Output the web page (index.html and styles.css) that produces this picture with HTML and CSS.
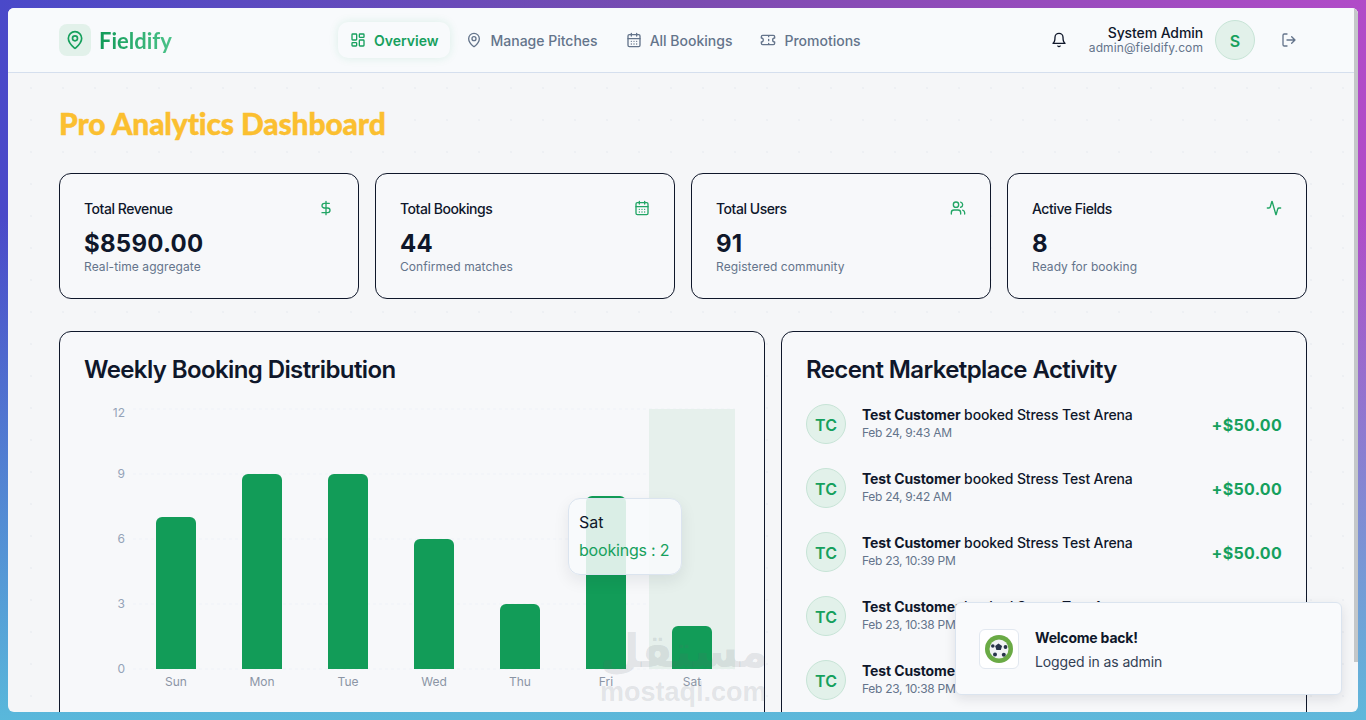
FILE: index.html
```html
<!DOCTYPE html>
<html lang="en">
<head>
<meta charset="utf-8">
<title>Fieldify</title>
<link rel="stylesheet" href="styles.css">
</head>
<body>
<div class="window">
  <header class="topbar">
    <a class="brand">
      <span class="brand-mark"><svg class="i20" viewBox="0 0 24 24"><path d="M20 10c0 5-5.500 10.200-7.400 11.800a1 1 0 0 1-1.200 0C9.500 20.200 4 15 4 10a8 8 0 0 1 16 0"/><circle cx="12" cy="10" r="3"/></svg></span>
      <span class="brand-name">Fieldify</span>
    </a>
    <nav class="nav">
      <a class="nav-item active"><svg class="i16" viewBox="0 0 24 24"><rect width="7" height="9" x="3" y="3" rx="1"/><rect width="7" height="5" x="14" y="3" rx="1"/><rect width="7" height="9" x="14" y="12" rx="1"/><rect width="7" height="5" x="3" y="16" rx="1"/></svg>Overview</a>
      <a class="nav-item"><svg class="i16" viewBox="0 0 24 24"><path d="M20 10c0 5-5.500 10.200-7.400 11.800a1 1 0 0 1-1.200 0C9.500 20.200 4 15 4 10a8 8 0 0 1 16 0"/><circle cx="12" cy="10" r="3"/></svg>Manage Pitches</a>
      <a class="nav-item"><svg class="i16" viewBox="0 0 24 24"><path d="M8 2v4M16 2v4"/><rect width="18" height="18" x="3" y="4" rx="2"/><path d="M3 10h18M8 14h.01M12 14h.01M16 14h.01M8 18h.01M12 18h.01M16 18h.01"/></svg>All Bookings</a>
      <a class="nav-item"><svg class="i16" viewBox="0 0 24 24"><path d="M2 9a3 3 0 0 1 0 6v2a2 2 0 0 0 2 2h16a2 2 0 0 0 2-2v-2a3 3 0 0 1 0-6V7a2 2 0 0 0-2-2H4a2 2 0 0 0-2 2ZM13 5v2M13 17v2M13 11v2"/></svg>Promotions</a>
    </nav>
    <div class="account">
      <svg class="i16 bell" viewBox="0 0 24 24"><path d="M10.300 21a1.940 1.940 0 0 0 3.400 0"/><path d="M6 8a6 6 0 0 1 12 0c0 7 3 9 3 9H3s3-2 3-9"/></svg>
      <div class="who"><div class="who-name">System Admin</div><div class="who-mail">admin@fieldify.com</div></div>
      <span class="avatar avatar-lg">S</span>
      <svg class="i16 logout" viewBox="0 0 24 24"><path d="M9 21H5a2 2 0 0 1-2-2V5a2 2 0 0 1 2-2h4M16 17l5-5-5-5M21 12H9"/></svg>
    </div>
  </header>

  <main class="content">
    <div class="inner">
      <h1 class="title">Pro Analytics Dashboard</h1>
      <section class="stats">
        <article class="stat">
          <div class="stat-head"><span>Total Revenue</span><svg class="i16 ok" viewBox="0 0 24 24"><path d="M12 2v20M17 5H9.500a3.500 3.500 0 0 0 0 7h5a3.500 3.500 0 0 1 0 7H6"/></svg></div>
          <div class="stat-value">$8590.00</div><div class="stat-note">Real-time aggregate</div>
        </article>
        <article class="stat">
          <div class="stat-head"><span>Total Bookings</span><svg class="i16 ok" viewBox="0 0 24 24"><path d="M8 2v4M16 2v4"/><rect width="18" height="18" x="3" y="4" rx="2"/><path d="M3 10h18M8 14h.01M12 14h.01M16 14h.01M8 18h.01M12 18h.01M16 18h.01"/></svg></div>
          <div class="stat-value">44</div><div class="stat-note">Confirmed matches</div>
        </article>
        <article class="stat">
          <div class="stat-head"><span>Total Users</span><svg class="i16 ok" viewBox="0 0 24 24"><path d="M16 21v-2a4 4 0 0 0-4-4H6a4 4 0 0 0-4 4v2"/><circle cx="9" cy="7" r="4"/><path d="M22 21v-2a4 4 0 0 0-3-3.870M16 3.130a4 4 0 0 1 0 7.750"/></svg></div>
          <div class="stat-value">91</div><div class="stat-note">Registered community</div>
        </article>
        <article class="stat">
          <div class="stat-head"><span>Active Fields</span><svg class="i16 ok" viewBox="0 0 24 24"><path d="M22 12h-2.480a2 2 0 0 0-1.930 1.460l-2.350 8.360a.25.25 0 0 1-.48 0L9.240 2.180a.25.25 0 0 0-.48 0l-2.350 8.360A2 2 0 0 1 4.490 12H2"/></svg></div>
          <div class="stat-value">8</div><div class="stat-note">Ready for booking</div>
        </article>
      </section>

      <section class="panels">
        <article class="panel">
          <h2 class="panel-title">Weekly Booking Distribution</h2>
          <div class="chart">
            <svg class="chart-svg" width="656" height="306" viewBox="0 -6 656 306">
              <g class="grid">
                <path d="M49 1H651M49 66H651M49 131H651M49 196H651M49 261H651"/>
              </g>
              <rect class="cursor" x="565" y="1" width="86" height="260"/>
              <g class="bars">
                <path d="M72 261V115a6 6 0 0 1 6-6h28a6 6 0 0 1 6 6V261Z"/>
                <path d="M158 261V72a6 6 0 0 1 6-6h28a6 6 0 0 1 6 6V261Z"/>
                <path d="M244 261V72a6 6 0 0 1 6-6h28a6 6 0 0 1 6 6V261Z"/>
                <path d="M330 261V137a6 6 0 0 1 6-6h28a6 6 0 0 1 6 6V261Z"/>
                <path d="M416 261V202a6 6 0 0 1 6-6h28a6 6 0 0 1 6 6V261Z"/>
                <path d="M502 261V94a6 6 0 0 1 6-6h28a6 6 0 0 1 6 6V261Z"/>
                <path d="M588 261V224a6 6 0 0 1 6-6h28a6 6 0 0 1 6 6V261Z"/>
              </g>
              <g class="y-axis">
                <text x="41" y="9">12</text><text x="41" y="70">9</text><text x="41" y="135">6</text><text x="41" y="200">3</text><text x="41" y="265">0</text>
              </g>
              <g class="x-axis">
                <text x="92" y="278">Sun</text><text x="178" y="278">Mon</text><text x="264" y="278">Tue</text><text x="350" y="278">Wed</text><text x="436" y="278">Thu</text><text x="522" y="278">Fri</text><text x="608" y="278">Sat</text>
              </g>
            </svg>
            <div class="tip"><div class="tip-label">Sat</div><div class="tip-value">bookings : 2</div></div>
          </div>
        </article>

        <article class="panel">
          <h2 class="panel-title">Recent Marketplace Activity</h2>
          <ul class="feed">
            <li class="row"><span class="avatar">TC</span><div class="row-body"><div class="row-text"><b>Test Customer</b> booked Stress Test Arena</div><div class="row-time">Feb 24, 9:43 AM</div></div><span class="row-amt">+$50.00</span></li>
            <li class="row"><span class="avatar">TC</span><div class="row-body"><div class="row-text"><b>Test Customer</b> booked Stress Test Arena</div><div class="row-time">Feb 24, 9:42 AM</div></div><span class="row-amt">+$50.00</span></li>
            <li class="row"><span class="avatar">TC</span><div class="row-body"><div class="row-text"><b>Test Customer</b> booked Stress Test Arena</div><div class="row-time">Feb 23, 10:39 PM</div></div><span class="row-amt">+$50.00</span></li>
            <li class="row"><span class="avatar">TC</span><div class="row-body"><div class="row-text"><b>Test Customer</b> booked Stress Test Arena</div><div class="row-time">Feb 23, 10:38 PM</div></div><span class="row-amt">+$50.00</span></li>
            <li class="row"><span class="avatar">TC</span><div class="row-body"><div class="row-text"><b>Test Customer</b> booked Stress Test Arena</div><div class="row-time">Feb 23, 10:38 PM</div></div><span class="row-amt">+$50.00</span></li>
          </ul>
        </article>
      </section>
    </div>
  </main>

  <div class="scrollbar"></div>

  <aside class="toast">
    <span class="toast-icon"><svg width="28" height="28" viewBox="0 0 28 28"><circle class="ball-ring" cx="14" cy="14" r="14"/><circle class="ball" cx="14" cy="14" r="9.500"/><g class="ball-spots"><path d="M13.500 8.500l3.600 2.500-1.300 4.100h-4.400l-1.300-4.100Z"/><circle cx="7.800" cy="11" r="1.800"/><circle cx="20.500" cy="12" r="1.900"/><circle cx="10" cy="19.500" r="2"/><circle cx="18.800" cy="19.800" r="2"/></g></svg></span>
    <div class="toast-body"><div class="toast-title">Welcome back!</div><div class="toast-text">Logged in as admin</div></div>
  </aside>

  <div class="watermark" aria-hidden="true"><div class="wm-ar">مستقل</div><div class="wm-en">mostaql.com</div></div>
</div>
</body>
</html>
```
FILE: styles.css
```css
* { box-sizing: border-box; }
html, body { height: 100%; }
body {
  margin: 0;
  padding: 8px;
  overflow: hidden;
  font-family: "Inter", "Liberation Sans", sans-serif;
  color: #0f172a;
  background:
    linear-gradient(180deg, rgba(80,190,220,0) 30%, rgba(90,190,220,.95) 100%),
    linear-gradient(90deg, #4a49c9 0%, #7a4cb0 50%, #b14cc8 100%);
}
.window {
  position: relative;
  height: 704px;
  border-radius: 6px;
  overflow: hidden;
  background-color: #f5f6f8;
  display: flex;
  flex-direction: column;
}
svg { display: block; }
.i20, .i16 { fill: none; stroke: currentColor; stroke-width: 2; stroke-linecap: round; stroke-linejoin: round; flex: none; }
.i20 { width: 20px; height: 20px; }
.i16 { width: 16px; height: 16px; }
.ok { color: #22a565; }

.topbar {
  height: 65px;
  flex: none;
  display: flex;
  align-items: center;
  padding: 0 62px 0 51px;
  background: #f8fafc;
  border-bottom: 1px solid #d5dfee;
  position: relative;
}
.brand { display: flex; align-items: center; gap: 8px; width: 279px; }
.brand-mark {
  width: 32px; height: 32px; border-radius: 8px;
  background: #e2f1ea; color: #16a05d;
  display: flex; align-items: center; justify-content: center;
}
.brand-name {
  font-size: 22px; font-weight: 700; letter-spacing: 0;
  font-family: "Lato", sans-serif;
  background: linear-gradient(90deg, #119a58, #4cc38a);
  -webkit-background-clip: text; background-clip: text; color: transparent;
}
.nav { display: flex; align-items: center; gap: 4px; flex: 1; }
.nav-item {
  display: flex; align-items: center; gap: 8px;
  padding: 0 12px; height: 36px; border-radius: 10px;
  font-size: 14px; font-weight: 500; color: #64748b; letter-spacing: 0;
}
.nav-item.active {
  color: #16a05d; font-weight: 600; background: #f8fafc;
  box-shadow: 0 0 10px rgba(20,160,93,.13);
}
.account { display: flex; align-items: center; }
.bell { color: #0f172a; margin-right: 22px; }
.who { text-align: right; margin-right: 12px; }
.who-name { font-size: 14px; line-height: 16px; font-weight: 500; letter-spacing: -.1px; }
.who-mail { font-size: 12px; line-height: 14px; color: #64748b; letter-spacing: .1px; }
.avatar {
  width: 40px; height: 40px; border-radius: 50%; flex: none;
  display: flex; align-items: center; justify-content: center;
  background: #e2f1ea; border: 1px solid #c7e4d6; color: #16a05d;
  font-size: 16px; font-weight: 600;
  padding-top: 1px;
}
.logout { color: #64748b; margin-left: 26px; margin-right: -1px; }

.content {
  flex: 1; min-height: 0; overflow: hidden;
  padding: 0 51px;
  background-image: radial-gradient(circle, rgba(148,163,184,.08) 1px, transparent 1.2px);
  background-size: 32px 32px;
  background-position: 7px -1px;
}
.inner { width: 1248px; }
.title {
  margin: 32px 0 32px;
  font-family: "Lato", sans-serif;
  font-size: 30px; line-height: 36px; font-weight: 900; letter-spacing: -.15px;
  color: #fbbf30;
  -webkit-text-stroke: .4px #fbbf30;
}
.stats { display: grid; grid-template-columns: repeat(4, 300px); gap: 16px; }
.stat {
  height: 126px; padding: 25px 24px 0;
  border: 1px solid #0f172a; border-radius: 12px;
  background: #f7f8fa;
}
.stat-head { display: flex; align-items: flex-start; justify-content: space-between; font-size: 14px; font-weight: 500; letter-spacing: -.45px; line-height: 20px; }
.stat-head .ok { margin-top: 1px; }
.stat-value { font-size: 24px; font-weight: 700; line-height: 32px; margin-top: 9px; letter-spacing: .25px; }
.stat-note { font-size: 12px; line-height: 16px; color: #64748b; letter-spacing: .08px; margin-top: -1px; }

.panels { display: grid; grid-template-columns: 706px 526px; gap: 16px; margin-top: 32px; }
.panel {
  height: 420px; padding: 24px;
  border: 1px solid #0f172a; border-radius: 12px;
  background: #f7f8fa;
}
.panel-title { margin: 0; font-size: 24px; line-height: 28px; font-weight: 600; letter-spacing: -.6px; }
.chart { position: relative; margin-top: 18px; }
.grid path { stroke: #e2e8f0; stroke-width: 1; stroke-dasharray: 3 3; fill: none; opacity: .35; }
.cursor { fill: #e6f0ec; }
.bars path { fill: #129c58; }
.y-axis text { font-size: 12px; fill: #94a3b8; text-anchor: end; }
.x-axis text { font-size: 12px; fill: #8b95a5; text-anchor: middle; }
.tip {
  position: absolute; left: 484px; top: 96px;
  width: 114px; height: 77px; padding: 10px;
  border: 1px solid #dbe4ef; border-radius: 12px;
  background: rgba(248,250,252,.87);
  box-shadow: 0 6px 16px rgba(15,23,42,.08);
  font-size: 16px; line-height: 24px;
}
.tip-label { margin-top: 1px; }
.tip-value { color: #16a05d; margin-top: 4px; white-space: nowrap; letter-spacing: -.2px; }

.feed { list-style: none; margin: 8px 0 0; padding: 0; }
.row { display: flex; align-items: center; height: 64px; }
.row-body { flex: 1; margin-left: 16px; }
.row-text { font-size: 14px; line-height: 18px; font-weight: 500; letter-spacing: -.13px; }
.row-text b { font-weight: 700; }
.row-time { font-size: 12px; line-height: 18px; color: #64748b; letter-spacing: -.3px; }
.row-amt { font-size: 16px; font-weight: 700; color: #16a05d; letter-spacing: .3px; padding-top: 2px; }

.scrollbar { position: absolute; right: 0; top: 0; width: 4px; height: 654px; background: #c4c7c9; }

.toast {
  position: absolute; left: 947px; top: 594px;
  width: 387px; height: 93px;
  display: flex; align-items: center; gap: 16px;
  padding: 0 23px;
  background: #f9fafc;
  border: 1px solid #dbe4ef; border-radius: 6px;
  box-shadow: 0 4px 12px rgba(15,23,42,.1);
}
.toast-icon {
  width: 40px; height: 40px; border: 1px solid #e2e8f0; border-radius: 6px; background: #fff;
  display: flex; align-items: center; justify-content: center; flex: none;
}
.ball-ring { fill: #6aaa45; }
.ball { fill: #f1f3f5; }
.ball-spots { fill: #27344a; }
.toast-body { padding-top: 2px; }
.toast-title { font-size: 14px; line-height: 20px; font-weight: 700; letter-spacing: -.2px; margin-bottom: 4px; }
.toast-text { font-size: 14px; line-height: 20px; color: #334155; letter-spacing: -.12px; }

.watermark {
  position: absolute; left: 592px; top: 616px; width: 166px;
  color: rgba(90,100,110,.14); text-align: center; pointer-events: none;
  font-family: "DejaVu Sans", sans-serif; font-weight: 700;
}
.wm-ar { font-size: 46px; line-height: 54px; white-space: nowrap; }
.wm-en { font-size: 27px; line-height: 28px; font-family: "Liberation Sans", sans-serif; white-space: nowrap; }
```
